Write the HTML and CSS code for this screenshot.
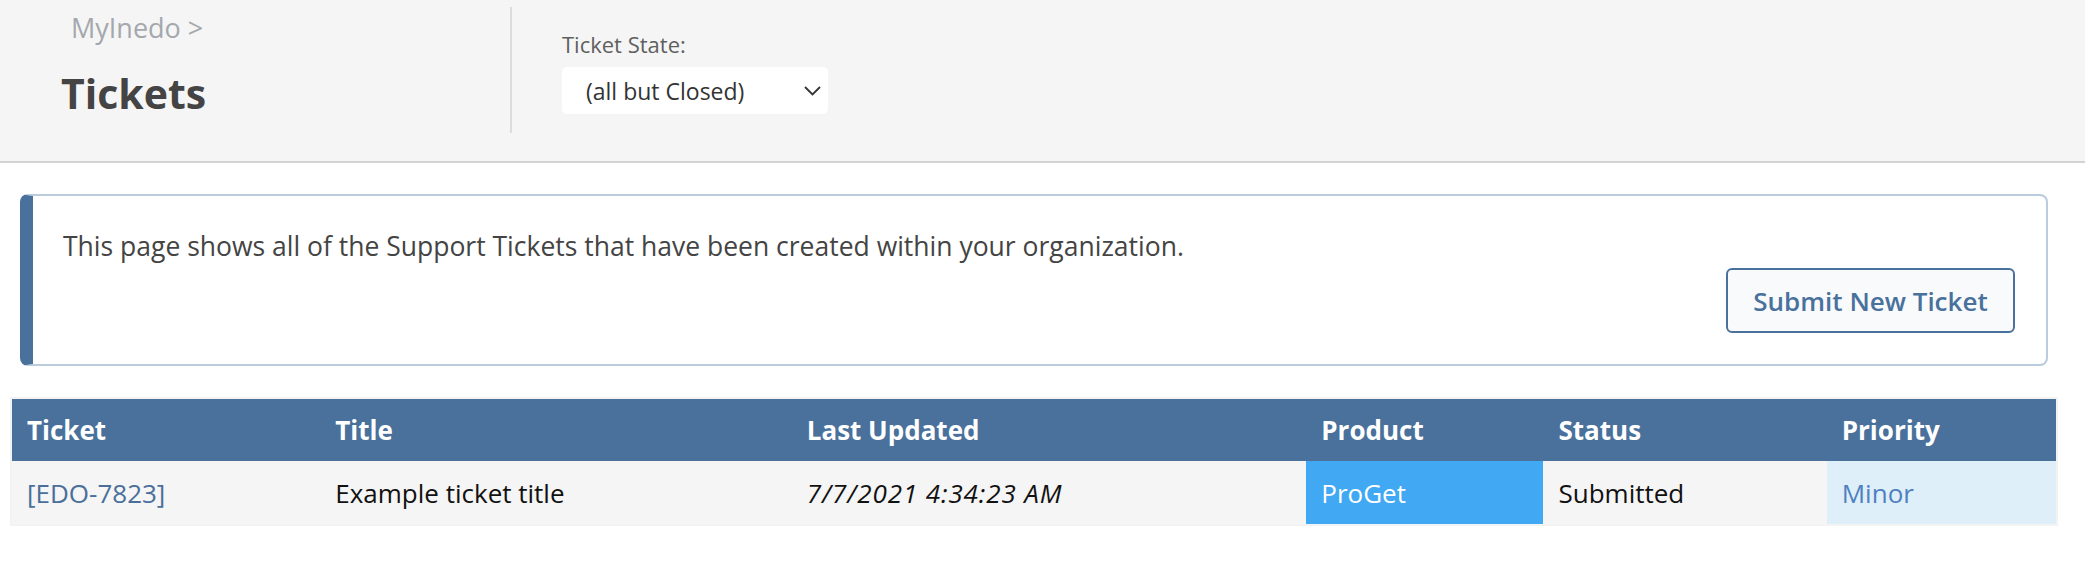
FILE: index.html
```html
<!DOCTYPE html>
<html lang="en">
<head>
<meta charset="utf-8">
<title>Tickets</title>
<link rel="stylesheet" href="styles.css">
</head>
<body>
<header class="page-header">
  <div class="title-block">
    <div class="breadcrumb">MyInedo &gt;</div>
    <h1 class="page-title">Tickets</h1>
  </div>
  <div class="filters">
    <div class="filter-label">Ticket State:</div>
    <div class="select">
      <span class="select-value">(all but Closed)</span>
      <svg class="chevron" width="17" height="10" viewBox="0 0 17 10"><polyline points="1,1 8.5,8.5 16,1" fill="none" stroke="#333" stroke-width="1.8"/></svg>
    </div>
  </div>
</header>
<main class="content">
  <div class="info-box">
    <p class="info-text">This page shows all of the Support Tickets that have been created within your organization.</p>
    <div class="actions"><button class="btn">Submit New Ticket</button></div>
  </div>
  <table class="tickets">
    <colgroup>
      <col class="c-ticket"><col class="c-title"><col class="c-updated"><col class="c-product"><col class="c-status"><col class="c-priority">
    </colgroup>
    <thead>
      <tr><th>Ticket</th><th>Title</th><th>Last Updated</th><th>Product</th><th>Status</th><th>Priority</th></tr>
    </thead>
    <tbody>
      <tr>
        <td><a class="ticket-link" href="#">[EDO-7823]</a></td>
        <td>Example ticket title</td>
        <td class="date">7/7/2021 4:34:23 AM</td>
        <td class="product">ProGet</td>
        <td>Submitted</td>
        <td class="priority">Minor</td>
      </tr>
    </tbody>
  </table>
</main>
</body>
</html>
```

FILE: styles.css
```css
body {
  margin: 0;
  font-family: "Open Sans", "Noto Sans", sans-serif;
  background: #fff;
}

.page-header {
  display: flex;
  align-items: flex-start;
  height: 161px;
  background: #f5f5f5;
  border-bottom: 2px solid #d3d3d3;
}

.title-block {
  box-sizing: border-box;
  width: 510px;
  padding: 12px 0 0 61px;
}

.breadcrumb {
  margin-left: 10px;
  font-size: 27px;
  line-height: 32px;
  color: #a4a8ad;
}

.page-title {
  margin: 24px 0 0;
  font-size: 41px;
  line-height: 50px;
  font-weight: 700;
  color: #444;
}

.filters {
  box-sizing: border-box;
  margin-top: 7px;
  height: 126px;
  border-left: 2px solid #dcdcdc;
  padding: 24px 0 0 50px;
}

.filter-label {
  font-size: 22px;
  line-height: 26px;
  color: #5f5f5f;
}

.select {
  box-sizing: border-box;
  margin-top: 10px;
  width: 266px;
  height: 47px;
  background: #fff;
  border-radius: 5px;
  display: flex;
  align-items: center;
  justify-content: space-between;
  padding: 0 7px 0 24px;
}

.select-value {
  font-size: 23px;
  color: #333;
}

.content {
  width: 2068px;
  padding-top: 31px;
}

.info-box {
  margin: 0 20px;
  border: 2px solid #b9cbdd;
  border-left: 13px solid #49719c;
  border-radius: 8px;
  padding: 33px 31px 31px 30px;
}

.info-text {
  margin: 0;
  font-size: 26.5px;
  line-height: 35px;
  color: #444;
}

.actions {
  display: flex;
  justify-content: flex-end;
  margin-top: 4px;
}

.btn {
  box-sizing: border-box;
  width: 289px;
  height: 65px;
  border: 2px solid #49719c;
  border-radius: 6px;
  background: #f8fafc;
  color: #49719c;
  font-family: "Open Sans", "Noto Sans", sans-serif;
  font-size: 26px;
  font-weight: 600;
  padding: 0;
}

.tickets {
  margin: 31px 10px 0;
  width: 2048px;
  table-layout: fixed;
  border-collapse: collapse;
  border: 2px solid #f3f3f3;
}

.c-ticket { width: 309px; }
.c-title { width: 471px; }
.c-updated { width: 514px; }
.c-product { width: 237px; }
.c-status { width: 283px; }
.c-priority { width: 230px; }

.tickets th {
  height: 62px;
  padding: 0 15px;
  text-align: left;
  background: #49719c;
  color: #fff;
  font-size: 26px;
  font-weight: 700;
}

.tickets td {
  height: 63px;
  padding: 0 15px;
  background: #f5f5f5;
  color: #111;
  font-size: 26px;
}

.ticket-link {
  color: #4a6f9a;
  text-decoration: none;
}

.tickets td.date {
  font-style: italic;
  letter-spacing: 0.9px;
}

.tickets td.product {
  background: #41a8f4;
  color: #fff;
}

.tickets td.priority {
  background: #dfeffa;
  color: #4e80bf;
}
```
